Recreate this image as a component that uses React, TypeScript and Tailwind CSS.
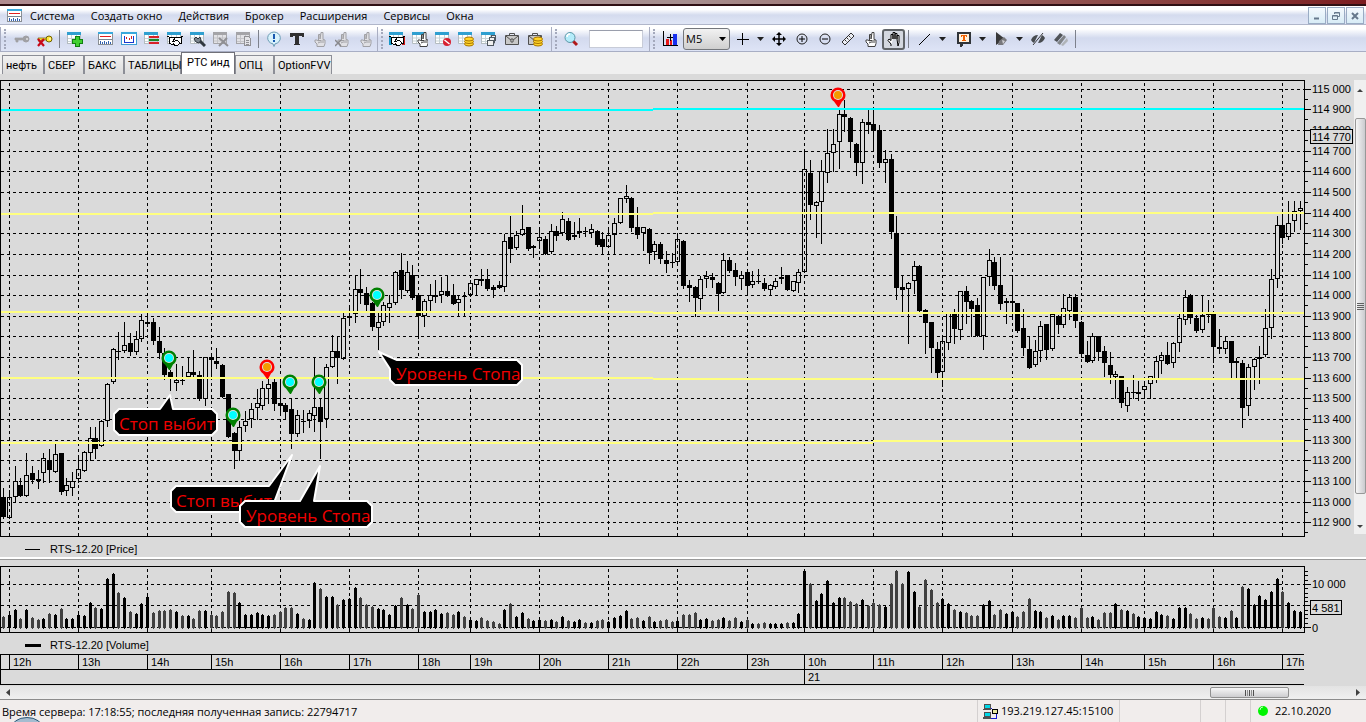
import type { ReactNode } from 'react'

// high, body top, body bottom, low (plot y), volume height, 1 = rising / 0 = falling
type Candle = [number, number, number, number, number, 0 | 1]

const CANDLES: Candle[] = [
  [488, 497, 517, 518, 11, 0], [490, 497, 518, 518, 13, 1], [466, 481, 497, 502, 18, 1], [478, 485, 496, 496, 9, 0],
  [453, 475, 496, 496, 18, 1], [466, 473, 480, 483, 10, 0], [470, 479, 481, 488, 8, 0], [453, 458, 473, 482, 9, 1],
  [449, 460, 470, 482, 14, 0], [444, 454, 472, 472, 13, 1], [453, 453, 492, 494, 19, 0], [478, 485, 491, 495, 9, 1],
  [472, 481, 488, 495, 9, 1], [456, 469, 479, 482, 13, 1], [451, 452, 471, 471, 12, 1], [427, 438, 453, 460, 25, 1],
  [427, 438, 449, 458, 20, 0], [420, 421, 446, 446, 19, 1], [383, 384, 421, 426, 49, 1], [348, 349, 382, 383, 54, 1],
  [332, 351, 352, 359, 35, 0], [322, 345, 351, 352, 30, 1], [333, 343, 352, 355, 16, 0], [331, 339, 352, 354, 14, 1],
  [314, 320, 339, 341, 24, 1], [314, 322, 324, 326, 31, 1], [318, 322, 341, 344, 15, 0], [327, 341, 353, 358, 17, 0],
  [348, 353, 375, 379, 17, 0], [370, 372, 378, 390, 18, 0], [364, 380, 383, 390, 16, 1], [366, 380, 381, 384, 12, 0],
  [357, 372, 377, 377, 12, 1], [350, 372, 375, 378, 9, 0], [371, 375, 399, 400, 17, 0], [357, 357, 399, 405, 17, 1],
  [355, 357, 360, 379, 13, 0], [348, 361, 364, 368, 12, 0], [364, 365, 397, 397, 16, 0], [394, 394, 437, 437, 36, 0],
  [432, 433, 451, 468, 35, 0], [421, 427, 451, 460, 25, 1], [411, 421, 426, 431, 13, 1], [403, 409, 419, 427, 13, 1],
  [389, 403, 408, 419, 15, 1], [381, 388, 406, 409, 13, 1], [375, 384, 389, 403, 12, 1], [378, 382, 404, 410, 13, 0],
  [379, 403, 406, 414, 16, 0], [403, 405, 412, 419, 20, 0], [398, 409, 434, 448, 20, 0], [410, 415, 434, 436, 14, 1],
  [410, 421, 422, 432, 9, 0], [410, 413, 421, 427, 8, 1], [358, 407, 416, 431, 45, 1], [399, 407, 422, 458, 39, 0],
  [364, 367, 419, 427, 31, 1], [335, 351, 367, 367, 31, 1], [337, 351, 358, 383, 23, 0], [313, 318, 359, 359, 28, 1],
  [307, 316, 318, 323, 29, 1], [276, 289, 314, 322, 40, 1], [269, 289, 293, 303, 30, 0], [287, 293, 305, 312, 23, 0],
  [302, 303, 327, 330, 21, 0], [313, 322, 328, 349, 19, 1], [302, 305, 322, 325, 18, 1], [295, 303, 308, 322, 13, 1],
  [271, 272, 303, 304, 22, 1], [253, 270, 290, 298, 30, 0], [261, 272, 291, 292, 23, 1], [265, 275, 298, 299, 19, 0],
  [295, 295, 316, 338, 33, 0], [299, 301, 316, 326, 16, 1], [284, 295, 301, 310, 16, 1], [280, 295, 297, 302, 18, 1],
  [277, 291, 295, 302, 14, 1], [275, 291, 296, 296, 15, 0], [284, 295, 304, 304, 13, 0], [295, 299, 303, 316, 16, 1],
  [292, 296, 297, 316, 11, 0], [280, 283, 295, 296, 8, 1], [279, 279, 285, 295, 7, 1], [269, 279, 281, 285, 10, 0],
  [269, 279, 289, 290, 7, 0], [285, 287, 290, 297, 6, 0], [281, 285, 288, 288, 4, 0], [234, 241, 287, 291, 18, 1],
  [216, 237, 249, 262, 24, 0], [231, 235, 248, 249, 11, 1], [205, 229, 235, 235, 15, 1], [227, 227, 249, 250, 9, 0],
  [245, 246, 248, 257, 7, 1], [227, 237, 241, 248, 8, 1], [236, 239, 254, 254, 7, 0], [224, 231, 252, 253, 8, 1],
  [226, 231, 236, 240, 6, 0], [212, 219, 233, 235, 11, 1], [218, 221, 240, 240, 7, 0], [222, 235, 237, 239, 6, 1],
  [218, 231, 233, 237, 8, 1], [227, 231, 232, 236, 5, 0], [224, 229, 233, 237, 5, 1], [230, 231, 245, 246, 7, 0],
  [232, 239, 247, 254, 8, 0], [227, 235, 247, 247, 6, 1], [218, 223, 235, 254, 10, 1], [198, 198, 223, 223, 12, 1],
  [185, 196, 199, 202, 17, 1], [197, 198, 228, 231, 9, 0], [207, 227, 235, 238, 10, 0], [227, 227, 233, 250, 7, 1],
  [228, 229, 253, 263, 11, 0], [241, 244, 252, 259, 6, 1], [242, 244, 259, 263, 7, 0], [251, 260, 264, 272, 8, 0],
  [253, 262, 263, 267, 6, 0], [233, 239, 262, 263, 7, 1], [240, 241, 286, 288, 13, 0], [280, 285, 288, 301, 13, 0],
  [286, 287, 298, 316, 15, 0], [276, 279, 299, 309, 8, 1], [271, 276, 279, 287, 9, 1], [273, 277, 280, 287, 7, 0],
  [282, 283, 294, 310, 8, 0], [253, 260, 293, 293, 10, 1], [257, 260, 271, 272, 7, 0], [263, 270, 277, 285, 10, 0],
  [271, 275, 279, 289, 6, 1], [269, 272, 286, 295, 8, 0], [271, 281, 285, 287, 4, 1], [269, 281, 282, 283, 4, 0],
  [278, 283, 289, 290, 5, 0], [284, 285, 290, 295, 4, 1], [278, 281, 287, 288, 4, 1], [267, 277, 279, 283, 4, 1],
  [275, 275, 290, 290, 5, 0], [281, 281, 291, 291, 5, 1], [269, 272, 283, 292, 14, 1], [150, 169, 272, 272, 57, 1],
  [160, 173, 205, 219, 44, 0], [201, 202, 206, 237, 27, 1], [160, 171, 202, 243, 34, 1], [129, 153, 173, 182, 47, 1],
  [129, 144, 153, 171, 25, 1], [110, 114, 142, 168, 30, 1], [100, 114, 117, 131, 30, 0], [117, 118, 142, 157, 26, 0],
  [143, 144, 163, 175, 24, 0], [119, 122, 163, 183, 28, 1], [110, 122, 125, 133, 22, 0], [109, 124, 131, 150, 25, 0],
  [125, 130, 163, 167, 23, 0], [150, 159, 163, 182, 21, 1], [154, 159, 232, 238, 44, 0], [216, 233, 288, 299, 57, 0],
  [276, 287, 290, 312, 44, 0], [282, 283, 289, 343, 56, 1], [261, 266, 281, 293, 36, 1], [265, 266, 311, 311, 21, 0],
  [309, 310, 323, 353, 48, 0], [322, 322, 348, 372, 38, 0], [342, 349, 373, 378, 25, 0], [335, 341, 372, 386, 29, 1],
  [313, 313, 343, 349, 24, 1], [309, 313, 329, 343, 18, 0], [291, 291, 330, 339, 16, 1], [286, 291, 302, 323, 15, 0],
  [300, 301, 309, 336, 12, 0], [298, 305, 336, 336, 12, 0], [277, 277, 336, 349, 23, 1], [249, 260, 277, 285, 27, 1],
  [257, 262, 286, 289, 13, 0], [257, 285, 304, 309, 18, 0], [298, 301, 303, 323, 14, 1], [276, 301, 303, 319, 16, 1],
  [303, 303, 331, 332, 11, 0], [309, 328, 348, 355, 16, 0], [337, 349, 368, 368, 29, 0], [340, 351, 365, 366, 17, 1],
  [321, 326, 351, 361, 16, 1], [324, 324, 350, 359, 10, 0], [314, 314, 349, 350, 12, 1], [315, 316, 325, 333, 8, 0],
  [294, 308, 325, 327, 12, 1], [294, 297, 311, 319, 12, 1], [294, 297, 321, 327, 10, 0], [321, 322, 354, 357, 20, 0],
  [341, 355, 362, 362, 10, 0], [333, 336, 361, 362, 11, 1], [336, 336, 352, 360, 8, 0], [346, 351, 363, 376, 15, 0],
  [352, 365, 375, 383, 15, 0], [371, 374, 377, 398, 24, 1], [376, 376, 403, 407, 18, 0], [387, 392, 406, 411, 17, 1],
  [375, 392, 393, 398, 14, 0], [381, 392, 394, 400, 11, 1], [381, 386, 390, 398, 10, 1], [376, 376, 384, 398, 9, 1],
  [356, 361, 380, 382, 16, 1], [352, 355, 361, 373, 13, 1], [342, 355, 364, 364, 12, 0], [342, 343, 363, 367, 9, 1],
  [312, 318, 343, 351, 20, 1], [290, 297, 320, 324, 20, 1], [294, 295, 318, 323, 14, 0], [315, 318, 331, 332, 9, 0],
  [296, 315, 330, 332, 10, 1], [300, 314, 315, 322, 9, 0], [313, 314, 347, 362, 20, 0], [329, 347, 349, 353, 11, 0],
  [336, 341, 349, 353, 10, 1], [341, 341, 363, 378, 17, 0], [358, 361, 363, 377, 10, 1], [360, 363, 408, 427, 41, 0],
  [364, 367, 406, 415, 39, 1], [358, 359, 367, 389, 23, 1], [346, 357, 359, 383, 32, 1], [309, 328, 355, 356, 28, 1],
  [269, 279, 328, 338, 36, 1], [216, 225, 279, 287, 49, 1], [214, 225, 238, 243, 36, 0], [201, 223, 237, 239, 25, 1],
  [201, 211, 221, 231, 17, 1], [201, 208, 211, 229, 16, 1],
]

const HOURS = [
  { x: 9, label: '12h' }, { x: 78, label: '13h' }, { x: 147, label: '14h' }, { x: 211, label: '15h' },
  { x: 280, label: '16h' }, { x: 349, label: '17h' }, { x: 418, label: '18h' }, { x: 470, label: '19h' },
  { x: 539, label: '20h' }, { x: 608, label: '21h' }, { x: 677, label: '22h' }, { x: 747, label: '23h' },
  { x: 804, label: '10h' }, { x: 873, label: '11h' }, { x: 942, label: '12h' }, { x: 1012, label: '13h' },
  { x: 1081, label: '14h' }, { x: 1144, label: '15h' }, { x: 1213, label: '16h' }, { x: 1282, label: '17h' },
]

const PRICES = Array.from({ length: 22 }, (_, i) => 115000 - i * 100)

const PINS = [
  { x: 169, y: 358, up: false }, { x: 233, y: 415, up: false }, { x: 267, y: 367, up: true },
  { x: 290, y: 382, up: false }, { x: 319, y: 382, up: false }, { x: 377, y: 295, up: false },
  { x: 838, y: 95, up: true },
]

const CALLOUTS = [
  { text: 'Стоп выбит', x: 119, y: 430, d: 'M119 409H160L170 395L173 409H212L217 414V430L212 435H119L114 430V414Z' },
  { text: 'Стоп выбит', x: 176, y: 507, d: 'M176 486H269L292 455L275 500V507L270 512H176L171 507V491Z' },
  { text: 'Уровень Стопа', x: 246, y: 522, d: 'M245 501H300L320 466L314 501H367L372 506V522L367 527H245L240 522V506Z' },
  { text: 'Уровень Стопа', x: 396, y: 380, d: 'M379 352L397 360H517L522 365V380L517 385H395L390 380V369Z' },
]

const MENU = ['Система', 'Создать окно', 'Действия', 'Брокер', 'Расширения', 'Сервисы', 'Окна']

const TABS = [
  { name: 'нефть', width: 'w-[42px]' },
  { name: 'СБЕР', width: 'w-[40px]' },
  { name: 'БАКС', width: 'w-[40px]' },
  { name: 'ТАБЛИЦЫ', width: 'w-[57px]' },
  { name: 'РТС инд', width: 'w-[54px]' },
  { name: 'ОПЦ', width: 'w-[39px]' },
  { name: 'OptionFVV', width: 'w-[58px]' },
]

const barX = (i: number) => Math.floor(3.6 + 5.763 * i)
const priceY = (i: number) => Math.round(88.85 + 20.635 * i)
const formatPrice = (p: number) => `${Math.floor(p / 1000)} ${String(p % 1000).padStart(3, '0')}`

/* ---------- icons ---------- */

function Icon({ children, soft = false }: { children: ReactNode; soft?: boolean }) {
  return (
    <svg width="16" height="16" viewBox="0 0 16 16" fill="none" shapeRendering={soft ? 'auto' : 'crispEdges'} aria-hidden="true">
      {children}
    </svg>
  )
}

function Sheet({ muted = false }: { muted?: boolean }) {
  return (
    <>
      <path d="M0.500 2.500h13v10h-13z" fill={muted ? '#e2e2e6' : '#fff'} stroke={muted ? '#a4a4a8' : '#b4bcc0'} />
      <path d="M0 1h14v3H0z" fill={muted ? '#a4a4a8' : '#2f9fd0'} />
      <path d="M1 7h12M1 10h12M4.500 4v8M9.500 4v8" stroke={muted ? '#c4c4c8' : '#c6d2d6'} />
    </>
  )
}

function Coins() {
  return (
    <g stroke="#a87400" fill="#ffd428">
      <ellipse cx="11" cy="13" rx="4.5" ry="2" />
      <ellipse cx="11" cy="10.500" rx="4.500" ry="2" />
      <ellipse cx="11" cy="8" rx="4.5" ry="2" />
    </g>
  )
}

function Key({ color, edge }: { color: string; edge: string }) {
  return (
    <>
      <path d="M10 7H1v2h1v2h2V9h6z" fill={color} stroke={edge} strokeWidth="0.7" />
      <circle cx="12" cy="8" r="3" fill={color} stroke={edge} />
      <path d="M12 7.500h2v1h-2z" fill="#fff" />
    </>
  )
}

const HAND = 'M5 15V13L2 9.500L3 8L5 9.500V3.500H7V8M7 8V1.500H9V8M9 8V2.500H11V8M11 8V4.500H13V11.500L12 15Z'
const TWO_FINGERS = 'M5 15.500V13L3 11V9H5L6.500 10V3.500H8V8L9 1.500H11V8.500L13 9V12.500L12 15.500Z'

function FingersIcon({ color, fill }: { color: string; fill: string }) {
  return (
    <>
      <path d={TWO_FINGERS} fill={fill} stroke={color} />
      <path d="M6 9.500h3M9 9v3M11 9v3M6 12l2-1" stroke={color} />
    </>
  )
}

function Handshake({ colored = false }: { colored?: boolean }) {
  return (
    <>
      {colored && <path d="M0 6h3v8H0z" fill="#1898c8" />}
      {colored && <path d="M13 6h3v8h-3z" fill="#d01818" />}
      <path d="M2 7L5 6L8 7L11 6L14 7V12L12 13L10 15L7 14L4 13L2 12Z" fill="#fff" stroke="#000" />
      <path d="M8 7L6 10L8 10L10 9L13 12M6 12l2 2M0 5l2 1v7M16 5l-2 1v7" stroke="#000" />
    </>
  )
}

function Briefcase() {
  return (
    <>
      <path d="M1.500 4.500h13v9h-13z" fill="#c8c8c8" stroke="#505050" />
      <path d="M5.500 4V2.500h5v2M2 5l6 5l6-5" stroke="#505050" />
      <path d="M7 8h2v3H7z" fill="#f0f0f0" stroke="#505050" />
    </>
  )
}

function WorkspaceIcon() {
  return (
    <Icon>
      <path d="M0.500 1.500h14v12h-14z" fill="#fff" stroke="#8a8f94" />
      <path d="M0 1h15v2H0z" fill="#38a8dc" />
      <path d="M2 6l2-1l2 1l2-1l2 1l3-1" stroke="#e02020" />
      <path d="M1 8.500h13" stroke="#7a8490" />
      <path d="M2.500 13v-3M4.500 13v-2M6.500 13v-3M8.500 13v-2M10.500 13v-3M12.500 13v-2" stroke="#3060b0" />
    </Icon>
  )
}

/* ---------- toolbar ---------- */

function Tool({ label, active = false, children }: { label: string; active?: boolean; children: ReactNode }) {
  return (
    <button
      type="button"
      aria-label={label}
      className={
        active
          ? 'flex h-[21px] w-[23px] items-center justify-center rounded-[3px] border-2 border-[#606468] bg-[#d4d8e0]'
          : 'flex h-[21px] w-[23px] items-center justify-center'
      }
    >
      {children}
    </button>
  )
}

function Separator() {
  return <div className="mx-[3px] h-[18px] w-px bg-[#7d818c]" />
}

function Grip() {
  return (
    <div className="flex h-full w-2 items-center justify-center border-l border-[#a9aec2]">
      <div className="h-[20px] border-l-2 border-dotted border-[#a4a9bc]" />
    </div>
  )
}

function Arrow({ label }: { label: string }) {
  return (
    <button type="button" aria-label={label} className="flex h-[21px] w-[14px] items-center justify-center">
      <svg width="7" height="4" viewBox="0 0 7 4" aria-hidden="true">
        <path d="M0 0h7L3.500 4z" fill="#202020" />
      </svg>
    </button>
  )
}

function Toolbar() {
  return (
    <div className="flex h-[27px] items-center border-b border-[#a8aec4] bg-linear-to-b from-white from-15% via-[#d3daee] via-50% to-[#dee4f6] pt-[2px]">
      <Grip />
      <div className="w-[2px]" />
      <Tool label="Подключить">
        <Icon soft><Key color="#a0a0a4" edge="#a0a0a4" /></Icon>
      </Tool>
      <Tool label="Отключить">
        <Icon soft>
          <Key color="#ffe838" edge="#706000" />
          <path d="M1 8l6 7M7 8l-6 7" stroke="#c80818" strokeWidth="2.200" />
        </Icon>
      </Tool>
      <Separator />
      <Tool label="Новая таблица">
        <Icon>
          <Sheet />
          <path d="M8.500 5.500h4v3h3v4h-3v3h-4v-3h-3v-4h3z" fill="#40d030" stroke="#108010" />
        </Icon>
      </Tool>
      <div className="w-[8px]" />
      <Tool label="График"><WorkspaceIcon /></Tool>
      <Tool label="Диаграмма">
        <Icon>
          <path d="M0.500 1.500h15v12h-15z" fill="#fff" stroke="#3e9cd4" />
          <path d="M0 1h16v2H0z" fill="#38a8dc" />
          <path d="M3.500 5v6.500h9V5" stroke="#1838d0" />
          <path d="M5.500 6v2M8.500 7v2M10.500 5v3" stroke="#d82020" />
        </Icon>
      </Tool>
      <Tool label="Стакан">
        <Icon>
          <Sheet />
          <path d="M5 5h10v2H5zM5 11h10v2H5z" fill="#d82028" />
          <path d="M5 8h10v2H5z" fill="#188828" />
        </Icon>
      </Tool>
      <Tool label="Сделки"><Icon><Sheet /><Handshake /></Icon></Tool>
      <Tool label="Настройка таблицы">
        <Icon soft>
          <Sheet />
          <path d="M9 9l6 6" stroke="#303840" strokeWidth="3" />
          <path d="M6 6l2 2l2-2l1 3l-2 3l-3-1l-2-3z" fill="#7c868e" stroke="#303840" />
        </Icon>
      </Tool>
      <Tool label="Закрыть таблицу">
        <Icon soft>
          <Sheet muted />
          <path d="M6 7l9 8M14 7l-8 8" stroke="#909094" strokeWidth="2" />
        </Icon>
      </Tool>
      <Tool label="Копировать">
        <Icon>
          <Sheet muted />
          <path d="M8.500 5.500h4l2 2v7h-6zM10 9h3M10 11h3M10 13h3" fill="#e4e4e8" stroke="#909094" />
        </Icon>
      </Tool>
      <Separator />
      <Tool label="Сообщения">
        <Icon soft>
          <path d="M8 1a6.500 6 0 0 1 1 11.900L8 15.500L7 12.900A6.500 6 0 0 1 8 1z" fill="#d8f2fc" stroke="#6c9cb4" />
          <path d="M7 3h2v5H7zM7 9h2v2H7z" fill="#1858b0" />
        </Icon>
      </Tool>
      <Tool label="Текст">
        <Icon><path d="M1 2h14v4h-2l-1-1h-2v8h1v1H5v-1h1V5H4L3 6H1z" fill="#303030" /></Icon>
      </Tool>
      <Tool label="Заявка"><Icon soft><FingersIcon color="#a0a0a4" fill="#e0e0e4" /></Icon></Tool>
      <Tool label="Снять заявку">
        <Icon soft>
          <FingersIcon color="#a0a0a4" fill="#e0e0e4" />
          <path d="M0 9l6 6M6 9l-6 6" stroke="#88888c" strokeWidth="1.500" />
        </Icon>
      </Tool>
      <Tool label="Стоп-заявка"><Icon soft><FingersIcon color="#a0a0a4" fill="#e0e0e4" /></Icon></Tool>

      <Grip />
      <Tool label="Таблица сделок"><Icon><Sheet /><Handshake colored /></Icon></Tool>
      <Tool label="Таблица заявок">
        <Icon soft><Sheet /><g transform="translate(3 0)"><FingersIcon color="#404040" fill="#fff" /></g></Icon>
      </Tool>
      <Tool label="Стоп-заявки">
        <Icon soft>
          <Sheet />
          <circle cx="12" cy="11" r="4" fill="#d82030" />
          <path d="M9.500 9l5 4" stroke="#fff" strokeWidth="1.500" />
        </Icon>
      </Tool>
      <Tool label="Позиции по деньгам"><Icon soft><Sheet /><Coins /></Icon></Tool>
      <Tool label="Позиции по бумагам">
        <Icon><Sheet /><path d="M6.500 9.500h6v5h-6zM8.500 9V6.500h5v5h-1M10.500 6V4.500h4v5h-1" fill="#f0f0f0" stroke="#505860" /></Icon>
      </Tool>
      <Tool label="Портфель"><Icon soft><Briefcase /></Icon></Tool>
      <Tool label="Деньги портфеля"><Icon soft><Briefcase /><Coins /></Icon></Tool>

      <div className="w-[5px]" />
      <Grip />
      <Tool label="Поиск">
        <Icon soft>
          <path d="M10 10l4 4" stroke="#b01818" strokeWidth="3" />
          <circle cx="7" cy="6.500" r="5" fill="#b4ecfa" stroke="#5c98a8" />
          <path d="M4 6a3 3 0 0 1 3-3" stroke="#fff" strokeWidth="1.500" />
        </Icon>
      </Tool>
      <div className="w-[7px]" />
      <input aria-label="Инструмент" className="h-[18px] w-[54px] border border-[#c8ccd8] border-t-[#9a9eac] bg-white px-1 text-[11px]" />
      <div className="w-[6px]" />
      <Grip />
      <div className="w-px" />
      <Tool label="Тип графика">
        <Icon>
          <path d="M1.500 0v14.500H16" stroke="#000" />
          <path d="M4 8h3v6H4zM8 9h2v5H8z" fill="#e81818" />
          <path d="M11 3h4v11h-4z" fill="#1830f0" />
          <path d="M5 6.500h6M8.500 3v7" stroke="#000" />
        </Icon>
      </Tool>
      <div className="w-[2px]" />
      <div className="relative flex h-[22px] w-[47px] items-center">
        <select
          aria-label="Таймфрейм"
          defaultValue="M5"
          className="h-full w-full appearance-none rounded-[3px] border border-[#74777c] bg-linear-to-b from-[#f2f2f2] to-[#cfcfcf] pl-[2px] text-[11px] text-black"
        >
          <option>M1</option>
          <option>M5</option>
          <option>M15</option>
        </select>
        <svg className="pointer-events-none absolute right-1 top-[9px]" width="7" height="4" viewBox="0 0 7 4" aria-hidden="true">
          <path d="M0 0h7L3.500 4z" fill="#000" />
        </svg>
      </div>
      <Tool label="Перекрестие"><Icon><path d="M8.500 2v12M3 8.500h12" stroke="#000" /></Icon></Tool>
      <Arrow label="Вид перекрестия" />
      <Tool label="Переместить">
        <Icon soft>
          <path d="M8 2v12M2 8h12" stroke="#000" strokeWidth="1.500" />
          <path d="M8 1l3 3H5zM8 15l3-3H5zM1 8l3-3v6zM15 8l-3-3v6z" fill="#000" />
        </Icon>
      </Tool>
      <Tool label="Увеличить">
        <Icon soft><circle cx="8" cy="8" r="5" stroke="#202020" /><path d="M5 8h6M8 5v6" stroke="#000" /></Icon>
      </Tool>
      <Tool label="Уменьшить">
        <Icon soft><circle cx="8" cy="8" r="5" stroke="#202020" /><path d="M5 8h6" stroke="#000" /></Icon>
      </Tool>
      <Tool label="Линейка">
        <Icon soft>
          <path d="M2 11L11 2L14 5L5 14Z" fill="#eceef4" stroke="#303030" />
          <path d="M5 9l1.500 1.500M7 7l1.500 1.500M9 5l1.500 1.500" stroke="#303030" />
        </Icon>
      </Tool>
      <Tool label="Выбор"><Icon soft><FingersIcon color="#404040" fill="#fff" /></Icon></Tool>
      <Tool label="Прокрутка" active><Icon soft><path d={HAND} fill="#fff" stroke="#000" /></Icon></Tool>
      <Separator />
      <Tool label="Линия"><Icon soft><path d="M3 14L14 3" stroke="#000" /></Icon></Tool>
      <Arrow label="Вид линии" />
      <div className="w-[3px]" />
      <Tool label="Метка">
        <Icon>
          <path d="M2 2h12v10H7l-2 3v-3H2z" fill="#fff0dc" stroke="#303438" strokeWidth="2" />
          <path d="M5 4h6v2h-1V5H9v4h1v1H6V9h1V5H6v1H5z" fill="#f06000" />
        </Icon>
      </Tool>
      <Arrow label="Вид метки" />
      <Tool label="Фигура">
        <Icon soft>
          <path d="M3 1L12 8L3 14Z" fill="#383838" />
          <path d="M6 10l5-4l3 3l-4 5H5z" fill="#78787c" />
          <path d="M9 9l3 1l-2 3z" fill="#d0d0d4" />
        </Icon>
      </Tool>
      <Arrow label="Вид фигуры" />
      <Tool label="Скрыть">
        <Icon soft>
          <path d="M1 9q2-5 7-5L4 12q-2-1-3-3zM15 7q-2 5-7 5l4-8q2 1 3 3z" fill="#484c50" />
          <path d="M3 14L13 2" stroke="#383838" />
        </Icon>
      </Tool>
      <Tool label="Стереть">
        <Icon soft>
          <path d="M1 9l6-7l3 2l-6 7z" fill="#505458" />
          <path d="M4 12l7-8l2 2l-6 8z" fill="#808488" />
          <path d="M8 14l6-7l1 3l-5 5z" fill="#b0b4b8" />
        </Icon>
      </Tool>
      <Separator />
    </div>
  )
}

/* ---------- charts ---------- */

function PriceChart() {
  return (
    <svg
      className="block h-[483px] min-w-0 flex-1"
      viewBox="0 74 1354 483"
      preserveAspectRatio="xMaxYMin meet"
      shapeRendering="crispEdges"
      fontFamily="'Liberation Sans', Arial, sans-serif"
      fontSize="11"
      role="img"
      aria-label="RTS-12.20 Price"
    >
      <g stroke="#000" strokeDasharray="3 3">
        {PRICES.map((p, i) => (
          <path key={p} d={`M1 ${priceY(i) + 0.5}H1304`} />
        ))}
        {HOURS.map((h) => (
          <path key={h.x} d={`M${h.x + 0.5} 83V536`} />
        ))}
      </g>

      {CANDLES.map(([high, top, bottom, low, , up], i) => {
        const x = barX(i)
        return (
          <g key={i} stroke="#000">
            <path d={`M${x + 0.5} ${high}V${top}M${x + 0.5} ${bottom}V${low + 1}`} />
            <rect x={x - 1.5} y={top + 0.5} width="4" height={Math.max(bottom - top - 1, 0) || 0.01} fill={up ? 'none' : '#000'} />
          </g>
        )
      })}

      <path d="M1 110H653M653 109H1304" stroke="#00ffff" strokeWidth="2" />
      <path
        d="M1 214H653M653 213H1304M1 312H653M653 313H1304M1 378H653M653 379H1304M1 443H873M873 441H1304"
        stroke="#ffff80"
        strokeWidth="2"
      />

      {PINS.map(({ x, y, up }) => (
        <g key={`${x}-${y}`} shapeRendering="auto">
          <path
            d={`M${x - 7.5} ${y}a7.500 7.500 0 1 1 15 0q0 4-3.500 6.500L${x + 1} ${y + 12}h-1l-4-5.500q-3.500-2.500-3.500-6.500z`}
            fill={up ? '#ff0000' : '#008000'}
          />
          <circle cx={x} cy={y} r="5" fill="#e0e0e0" />
          <circle cx={x} cy={y} r="4" fill={up ? '#f49a00' : '#00ffff'} />
        </g>
      ))}

      {CALLOUTS.map((c) => (
        <g key={c.d} shapeRendering="auto">
          <path d={c.d} fill="#000" stroke="#fff" strokeWidth="2" strokeLinejoin="round" />
          <text x={c.x} y={c.y} fill="#f00000" fontSize="17" fontFamily="'Open Sans', 'Noto Sans', sans-serif">
            {c.text}
          </text>
        </g>
      ))}

      <path d="M0.500 80.500H1304.500V536.500H0.500Z" fill="none" stroke="#000" />

      {/* price axis */}
      <g stroke="#000">
        {PRICES.map((p, i) => (
          <path key={p} d={`M1305 ${priceY(i) + 0.5}H1311M1305 ${priceY(i) + 10.5}H1308`} />
        ))}
      </g>
      {PRICES.map((p, i) => (
        <text key={p} x="1312" y={priceY(i) + 4}>
          {formatPrice(p)}
        </text>
      ))}
      <rect x="1310.500" y="129.500" width="42" height="14" fill="#dadada" stroke="#000" />
      <text x="1312" y="141">114 770</text>

      <path d="M25 549.500H40" stroke="#000" />
      <text x="50" y="553">RTS-12.20 [Price]</text>
    </svg>
  )
}

function VolumeChart() {
  const minor = Array.from({ length: 14 }, (_, i) => 628 - Math.round(i * 4.3))
  return (
    <svg
      className="block h-[126px] w-full"
      viewBox="0 560 1366 126"
      preserveAspectRatio="xMaxYMin meet"
      shapeRendering="crispEdges"
      fontFamily="'Liberation Sans', Arial, sans-serif"
      fontSize="11"
      role="img"
      aria-label="RTS-12.20 Volume"
    >
      <g stroke="#000" strokeDasharray="3 3">
        <path d="M1 584.500H1304M1 605.500H1304M1 627.500H1304" />
        {HOURS.map((h) => (
          <path key={h.x} d={`M${h.x + 0.5} 569V632`} />
        ))}
      </g>
      {CANDLES.map(([, , , , volume, up], i) => {
        const x = barX(i)
        const color = up ? '#000' : '#404040'
        return <path key={i} d={`M${x} ${627 - volume}h1v1h1V${628}h-1v1h-1v-1h-1V${628 - volume}h1z`} fill={color} />
      })}
      <path d="M0.500 566.500H1304.500V632.500H0.500Z" fill="none" stroke="#000" />
      <path d="M1305 584.500H1311M1305 605.500H1311M1305 627.500H1311" stroke="#000" />
      {minor.map((y) => (
        <path key={y} d={`M1305 ${y - 0.5}H1308`} stroke="#000" />
      ))}
      <text x="1312" y="588">10 000</text>
      <text x="1312" y="632">0</text>
      <rect x="1310.500" y="600.500" width="31" height="14" fill="#dadada" stroke="#000" />
      <text x="1312" y="612">4 581</text>

      <path d="M25 645.500H41" stroke="#000" strokeWidth="3" />
      <text x="50" y="649">RTS-12.20 [Volume]</text>

      {/* time axis */}
      <path d="M1304 654.500H0.500V684.500H1304M0 669.500H1304" fill="none" stroke="#000" />
      {HOURS.map((h) => (
        <path key={h.x} d={`M${h.x + 0.5} 654V669`} stroke="#000" />
      ))}
      <path d="M804.500 669V684" stroke="#000" />
      {HOURS.map((h) => (
        <text key={h.x} x={h.x + 4} y="666">
          {h.label}
        </text>
      ))}
      <text x="808" y="681">21</text>
    </svg>
  )
}

/* ---------- window chrome ---------- */

function WindowButton({ label, children }: { label: string; children: ReactNode }) {
  return (
    <button
      type="button"
      aria-label={label}
      className="flex h-[17px] w-[18px] items-center justify-center border border-[#9aacc4] bg-linear-to-b from-[#f4f9fe] to-[#d8ecf6]"
    >
      <svg width="10" height="10" viewBox="0 0 10 10" fill="none" stroke="#66788c" aria-hidden="true">
        {children}
      </svg>
    </button>
  )
}

function MenuBar() {
  return (
    <header className="flex h-[19px] items-center border-b border-[#b0b6ca] bg-linear-to-b from-white from-20% via-[#d4dbee] via-50% to-[#e0e6f6] pr-[2px] pt-px">
      <div className="flex w-[30px] justify-center">
        <WorkspaceIcon />
      </div>
      <nav className="flex flex-1 gap-4">
        {MENU.map((item) => (
          <a key={item} href="#" className="whitespace-nowrap text-[11px] leading-4 text-black">
            {item}
          </a>
        ))}
      </nav>
      <div className="flex gap-px">
        <WindowButton label="Свернуть"><path d="M2 7.500h5" strokeWidth="2" /></WindowButton>
        <WindowButton label="Восстановить"><path d="M3.500 3V1.500h5v4H7M1.500 4.500h5v4h-5zM1.500 5h5M3.500 2h5" /></WindowButton>
        <WindowButton label="Закрыть"><path d="M2 2l6 6M8 2l-6 6" strokeWidth="2" /></WindowButton>
      </div>
    </header>
  )
}

function Tabs() {
  return (
    <div className="flex h-[22px] items-end bg-[#f0f0f0] pl-[2px]" role="tablist">
      {TABS.map(({ name, width }) => {
        const active = name === 'РТС инд'
        return (
          <button
            key={name}
            type="button"
            role="tab"
            aria-selected={active}
            className={`${width} whitespace-nowrap border-x border-t text-left font-['Roboto'] text-[11px] text-black ${
              active
                ? 'h-[22px] border-[#707078] bg-white pb-px pl-[5px]'
                : 'h-[19px] border-[#8c8e96] bg-linear-to-b from-[#f2f2f2] to-[#dcdcdc] pl-[3px] pt-[2px]'
            }`}
          >
            {name}
          </button>
        )
      })}
    </div>
  )
}

function VerticalScrollbar() {
  return (
    <div className="pt-[6px]">
      <div className="flex h-[454px] w-3 flex-col items-center bg-[#f0f0f0]">
        <div className="flex h-[20px] items-center">
          <svg width="6" height="3" viewBox="0 0 6 3" aria-hidden="true"><path d="M0 3h6L3 0z" fill="#404040" /></svg>
        </div>
        <div className="h-[18px]" />
        <div className="flex w-[11px] flex-1 flex-col items-center justify-center gap-px rounded-[2px] border border-[#989898] bg-linear-to-r from-[#f6f6f6] to-[#cbcbcf]">
          <div className="h-px w-[7px] bg-[#606060]" />
          <div className="h-px w-[7px] bg-[#606060]" />
          <div className="h-px w-[7px] bg-[#606060]" />
          <div className="h-px w-[7px] bg-[#606060]" />
        </div>
        <div className="flex h-[40px] items-end pb-[6px]">
          <svg width="6" height="3" viewBox="0 0 6 3" aria-hidden="true"><path d="M0 0h6L3 3z" fill="#404040" /></svg>
        </div>
      </div>
    </div>
  )
}

function HorizontalScrollbar() {
  return (
    <div className="flex h-[13px] items-center bg-linear-to-b from-[#e3e3e3] to-[#f0f0f0] px-[6px]">
      <svg width="4" height="7" viewBox="0 0 4 7" aria-hidden="true"><path d="M4 0v7L0 3.500z" fill="#404040" /></svg>
      <div className="flex-1" />
      <div className="flex h-[11px] w-[79px] items-center justify-center gap-px rounded-[2px] border border-[#909090] bg-linear-to-b from-[#f6f6f6] to-[#cdcdd0]">
        <div className="h-[6px] w-px bg-[#505050]" />
        <div className="h-[6px] w-px bg-[#909090]" />
        <div className="h-[6px] w-px bg-[#505050]" />
        <div className="h-[6px] w-px bg-[#909090]" />
        <div className="h-[6px] w-px bg-[#505050]" />
      </div>
      <div className="w-[67px]" />
      <svg width="4" height="7" viewBox="0 0 4 7" aria-hidden="true"><path d="M0 0v7L4 3.500z" fill="#404040" /></svg>
    </div>
  )
}

function StatusBar() {
  return (
    <footer className="relative flex h-[23px] items-stretch overflow-hidden border-t border-[#8c8c8c] bg-[#f1edec] text-[11px] leading-6 text-black">
      <p className="flex-1 whitespace-nowrap pl-[2px]">
        Время сервера: 17:18:55; последняя полученная запись: 22794717
      </p>
      <div className="flex w-[142px] items-center gap-[3px] border-l border-[#d4d0d0] pl-1">
        <Icon>
          <path d="M2 1h6v4H2zM2 9h6v4H2z" fill="#00d8e8" stroke="#505050" />
          <path d="M1 6h8v1H1zM1 14h8v2H1z" fill="#505050" />
          <path d="M9 5l2 2M14 11v4H9" stroke="#1818d0" />
          <path d="M10 6h5v4h-5z" fill="#e8e8a0" stroke="#000" />
        </Icon>
        <span>193.219.127.45:15100</span>
      </div>
      <div className="w-[81px] border-l border-[#d4d0d0]" />
      <div className="w-[25px] border-l border-[#d4d0d0]" />
      <div className="w-[25px] border-l border-[#d4d0d0]" />
      <div className="flex w-[116px] items-center gap-[6px] border-l border-[#d4d0d0] pl-[6px]">
        <svg width="12" height="12" viewBox="0 0 12 12" aria-hidden="true">
          <circle cx="6" cy="6" r="5" fill="#00f400" />
          <path d="M3 5a3 3 0 0 1 3-3" stroke="#c0ffc0" fill="none" />
        </svg>
        <span>22.10.2020</span>
      </div>
      <svg className="absolute bottom-0 left-[13px]" width="28" height="5" viewBox="0 0 28 5" aria-hidden="true">
        <ellipse cx="14" cy="12" rx="16" ry="11.500" fill="#a4bcd0" stroke="#2c5878" />
      </svg>
    </footer>
  )
}

export default function App() {
  return (
    <div className="flex min-h-screen w-full flex-col overflow-hidden bg-[#dadada] font-['Open_Sans',sans-serif]">
      <div className="h-[6px] border-b-2 border-[#301014] bg-linear-to-r from-[#b08c90] via-[#a89090] via-50% to-[#7c1c20]" />
      <MenuBar />
      <Toolbar />
      <Tabs />
      <main className="flex-1">
        <div className="flex items-start">
          <PriceChart />
          <VerticalScrollbar />
        </div>
        <div className="h-[3px] border-b border-[#989898] bg-white" />
        <VolumeChart />
      </main>
      <HorizontalScrollbar />
      <StatusBar />
    </div>
  )
}
